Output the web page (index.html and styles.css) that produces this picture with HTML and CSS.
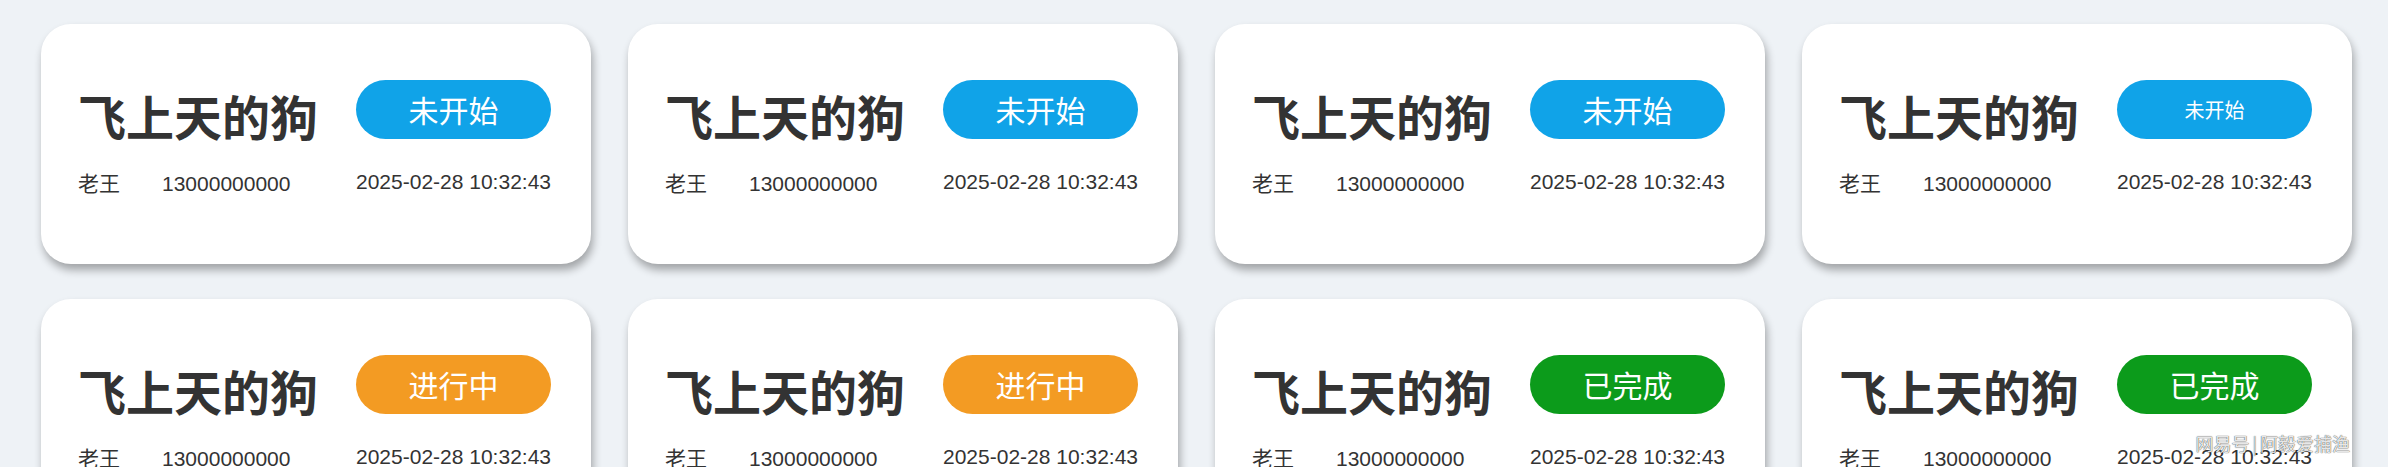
FILE: index.html
```html
<!DOCTYPE html>
<html lang="zh-CN">
<head>
<meta charset="utf-8">
<title>任务列表</title>
<link rel="stylesheet" href="styles.css">
</head>
<body>
<div class="grid">
  <div class="card">
    <div class="main">
      <div class="title">飞上天的狗</div>
      <div class="info"><span class="name">老王</span><span class="phone">13000000000</span></div>
    </div>
    <div class="side">
      <div class="badge badge-todo">未开始</div>
      <div class="date">2025-02-28 10:32:43</div>
    </div>
  </div>
  <div class="card">
    <div class="main">
      <div class="title">飞上天的狗</div>
      <div class="info"><span class="name">老王</span><span class="phone">13000000000</span></div>
    </div>
    <div class="side">
      <div class="badge badge-todo">未开始</div>
      <div class="date">2025-02-28 10:32:43</div>
    </div>
  </div>
  <div class="card">
    <div class="main">
      <div class="title">飞上天的狗</div>
      <div class="info"><span class="name">老王</span><span class="phone">13000000000</span></div>
    </div>
    <div class="side">
      <div class="badge badge-todo">未开始</div>
      <div class="date">2025-02-28 10:32:43</div>
    </div>
  </div>
  <div class="card">
    <div class="main">
      <div class="title">飞上天的狗</div>
      <div class="info"><span class="name">老王</span><span class="phone">13000000000</span></div>
    </div>
    <div class="side">
      <div class="badge badge-todo badge-small">未开始</div>
      <div class="date">2025-02-28 10:32:43</div>
    </div>
  </div>
  <div class="card">
    <div class="main">
      <div class="title">飞上天的狗</div>
      <div class="info"><span class="name">老王</span><span class="phone">13000000000</span></div>
    </div>
    <div class="side">
      <div class="badge badge-doing">进行中</div>
      <div class="date">2025-02-28 10:32:43</div>
    </div>
  </div>
  <div class="card">
    <div class="main">
      <div class="title">飞上天的狗</div>
      <div class="info"><span class="name">老王</span><span class="phone">13000000000</span></div>
    </div>
    <div class="side">
      <div class="badge badge-doing">进行中</div>
      <div class="date">2025-02-28 10:32:43</div>
    </div>
  </div>
  <div class="card">
    <div class="main">
      <div class="title">飞上天的狗</div>
      <div class="info"><span class="name">老王</span><span class="phone">13000000000</span></div>
    </div>
    <div class="side">
      <div class="badge badge-done">已完成</div>
      <div class="date">2025-02-28 10:32:43</div>
    </div>
  </div>
  <div class="card">
    <div class="main">
      <div class="title">飞上天的狗</div>
      <div class="info"><span class="name">老王</span><span class="phone">13000000000</span></div>
    </div>
    <div class="side">
      <div class="badge badge-done">已完成</div>
      <div class="date">2025-02-28 10:32:43</div>
    </div>
  </div>
</div>
<div class="watermark">网易号<span class="sep">|</span>阿毅爱捕渔</div>
</body>
</html>
```
FILE: styles.css
```css
html, body {
  margin: 0;
  padding: 0;
}
body {
  background: #eef2f6;
  height: 467px;
  overflow: hidden;
  position: relative;
  font-family: "Liberation Sans", "Noto Sans CJK SC", sans-serif;
  color: #333;
}
.grid {
  display: grid;
  grid-template-columns: repeat(4, 550px);
  column-gap: 37px;
  row-gap: 35px;
  padding: 24px 0 0 41px;
}
.card {
  box-sizing: border-box;
  height: 240px;
  background: #fff;
  border-radius: 30px;
  box-shadow: 2px 6px 8px rgba(0, 0, 0, 0.32);
  padding: 56px 40px 0 37px;
  display: flex;
  justify-content: space-between;
}
.main {
  display: flex;
  flex-direction: column;
}
.title {
  font-family: "Noto Sans CJK SC", sans-serif;
  font-weight: 700;
  font-size: 48px;
  line-height: 48px;
  margin-top: 11px;
  color: #333;
}
.info {
  margin-top: 31px;
  font-size: 21px;
  line-height: 24px;
  display: flex;
  align-items: baseline;
}
.name {
  font-family: "Noto Sans CJK SC", sans-serif;
  margin-right: 42px;
}
.side {
  width: 195px;
  display: flex;
  flex-direction: column;
  align-items: center;
}
.badge {
  width: 195px;
  height: 59px;
  border-radius: 30px;
  color: #fff;
  font-family: "Noto Sans CJK SC", sans-serif;
  font-size: 30px;
  line-height: 59px;
  text-align: center;
}
.badge-small {
  font-size: 20px;
}
.badge-todo {
  background: #10a3e8;
}
.badge-doing {
  background: #f39b23;
}
.badge-done {
  background: #0c9b1b;
}
.date {
  margin-top: 31px;
  font-size: 21px;
  line-height: 24px;
  white-space: nowrap;
}
.watermark {
  position: absolute;
  right: 38px;
  top: 430px;
  font-family: "Noto Sans CJK SC", sans-serif;
  font-size: 18px;
  line-height: 26px;
  color: rgba(255, 255, 255, 0.9);
  text-shadow: 0 0 1px rgba(0, 0, 0, 0.6), 0 0 1px rgba(0, 0, 0, 0.6);
  white-space: nowrap;
}
.sep {
  margin: 0 3px;
  font-weight: 300;
}
```
